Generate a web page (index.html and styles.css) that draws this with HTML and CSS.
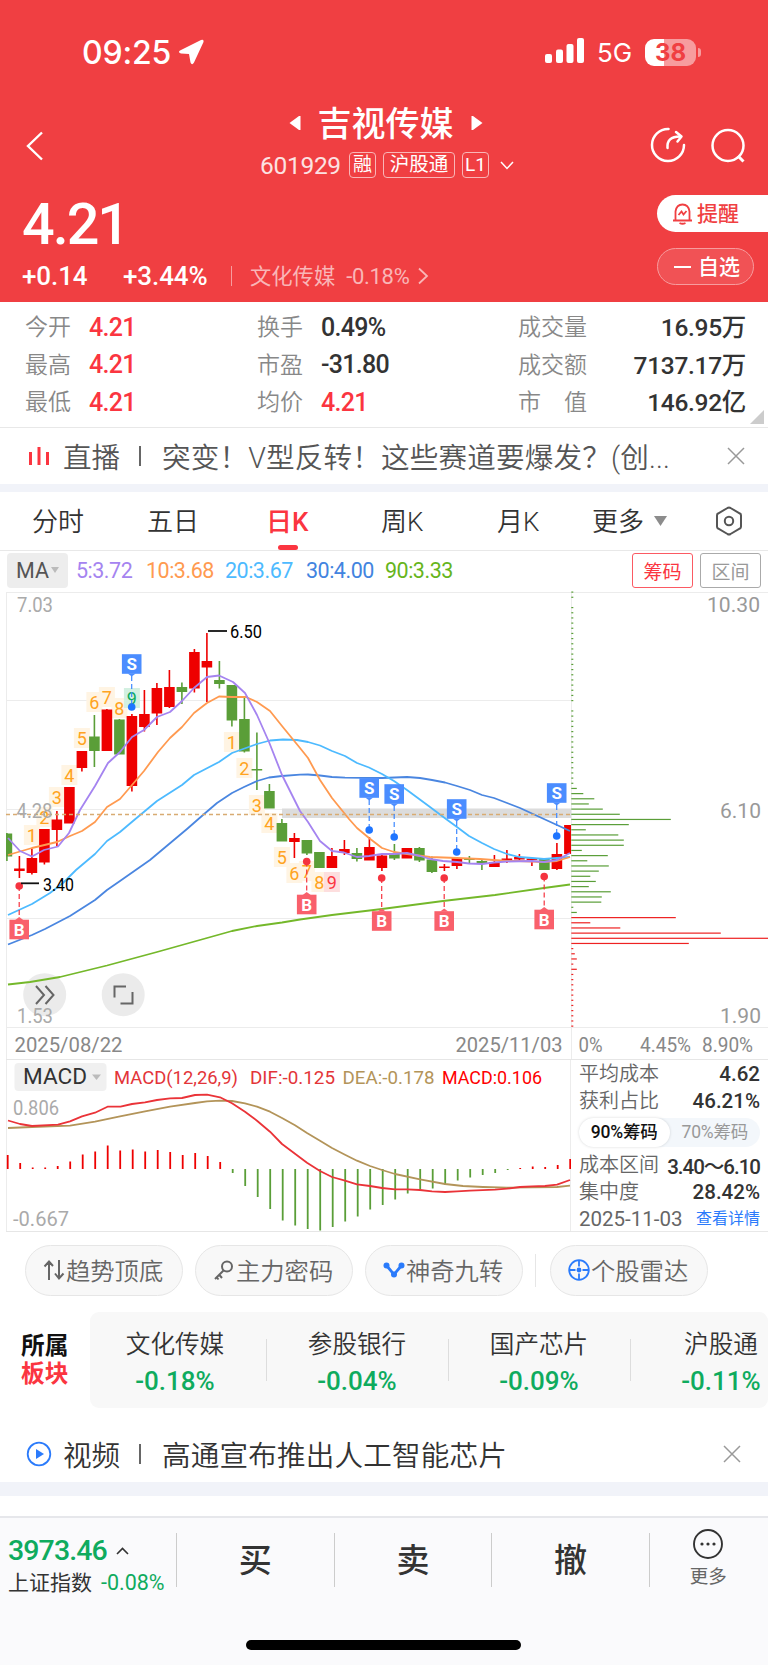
FILE: index.html
```html
<!DOCTYPE html>
<html lang="zh-CN">
<head>
  <meta charset="UTF-8">
  <title>吉视传媒 601929</title>
  <link rel="stylesheet" href="styles.css">
</head>
<body>

<header class="top">
  <div class="status">
    <span class="time">09:25</span>
    <svg width="26" height="26" viewBox="0 0 26 26"><path d="M23 1 L2 11.500 Q-0.500 13.500 3 14.500 L11 15 L12.500 23.500 Q14 27 16 23.500 L25.500 3 Q26 0 23 1Z" fill="#fff"/></svg>
    <svg class="signal" width="40" height="26" viewBox="0 0 40 26" fill="#fff">
      <rect x="0" y="16" width="7" height="9" rx="2"/><rect x="11" y="11.500" width="7" height="13.500" rx="2"/>
      <rect x="21.500" y="6" width="7" height="19" rx="2"/><rect x="32" y="0" width="7" height="25" rx="2"/>
    </svg>
    <span class="net">5G</span>
    <span class="battery">38</span>
    <i class="battery-tip"></i>
  </div>

  <div class="titlebar">
    <svg class="back" width="18" height="30" viewBox="0 0 18 30"><path d="M16 1.500 L2 15 L16 28.500" fill="none" stroke="#fff" stroke-width="2.400"/></svg>
    <div class="title">
      <h1>
        <svg width="12" height="16" viewBox="0 0 12 16"><path d="M11.500 1 V15 L10 15 L0.500 8 L10 1Z" fill="#fff"/></svg>
        <span>吉视传媒</span>
        <svg width="12" height="16" viewBox="0 0 12 16"><path d="M0.500 1 V15 L2 15 L11.500 8 L2 1Z" fill="#fff"/></svg>
      </h1>
      <p>
        <span class="code">601929</span>
        <span class="tag">融</span><span class="tag tag-wide">沪股通</span><span class="tag">L1</span>
        <svg width="14" height="9" viewBox="0 0 14 9"><path d="M1 1 L7 7.500 L13 1" fill="none" stroke="#fff" stroke-width="1.500"/></svg>
      </p>
    </div>
    <svg class="share" width="36" height="36" viewBox="0 0 36 36" fill="none" stroke="#fff" stroke-width="2.500" stroke-linecap="round">
      <path d="M18.500 2 A16 16 0 1 0 34 18"/><path d="M17.500 21 Q16.500 9.500 30 9.500"/><path d="M26 5 L31.500 9.500 L27.500 14.500" stroke-linejoin="round"/>
    </svg>
    <svg class="search" width="36" height="36" viewBox="0 0 36 36" fill="none" stroke="#fff" stroke-width="2.500"><circle cx="18" cy="17.500" r="15.500"/><path d="M28 28 L33.500 33.500" stroke-width="3"/></svg>
  </div>

  <div class="quote">
    <div>
      <div class="price">4.21</div>
      <div class="change">
        <b class="diff">+0.14</b><b class="pct">+3.44%</b><i></i>
        <span class="industry">文化传媒</span><span class="ind-pct">-0.18%</span>
        <svg width="11" height="18" viewBox="0 0 11 18"><path d="M1 1.500 L9 9 L1 16.500" fill="none" stroke="#f9b6b7" stroke-width="1.800"/></svg>
      </div>
    </div>
    <div class="actions">
      <button class="remind">
        <svg width="21" height="22" viewBox="0 0 21 22" fill="none" stroke="#f03f42" stroke-width="1.800"><path d="M1 17.500 H20 M3.500 17 V8.500 Q4.500 1.500 10.500 1.500 Q16.500 1.500 17.500 8.500 V17"/><path d="M6.500 12 L9.500 8.500 L11.500 11.500 L14.500 8"/><path d="M7.500 20 Q10.500 21.500 13.500 20"/></svg><span>提醒</span>
      </button>
      <button class="follow"><i></i><span>自选</span></button>
    </div>
  </div>
</header>

<section class="stats">
  <div><label>今开</label><b class="red">4.21</b></div>
  <div><label>换手</label><b>0.49%</b></div>
  <div><label>成交量</label><b>16.95万</b></div>
  <div><label>最高</label><b class="red">4.21</b></div>
  <div><label>市盈</label><b>-31.80</b></div>
  <div><label>成交额</label><b>7137.17万</b></div>
  <div><label>最低</label><b class="red">4.21</b></div>
  <div><label>均价</label><b class="red">4.21</b></div>
  <div><label class="spread">市值</label><b>146.92亿</b></div>
  <i class="corner"></i>
</section>

<section class="notice">
  <svg width="22" height="20" viewBox="0 0 22 20" stroke="#fb3540" stroke-width="3"><path d="M2.500 6 V19 M11 1 V19 M19.500 6 V19"/></svg>
  <span class="kind">直播</span><i></i><span class="text">突变！V型反转！这些赛道要爆发？(创...</span>
  <svg class="close" width="18" height="18" viewBox="0 0 18 18"><path d="M1 1 L17 17 M17 1 L1 17" stroke="#999" stroke-width="1.500"/></svg>
</section>

<nav class="tabs">
  <a>分时</a><a>五日</a><a class="active">日K</a><a>周K</a><a>月K</a>
  <a class="more">更多<svg width="13" height="10" viewBox="0 0 13 10"><path d="M0 0 H13 L6.500 10Z" fill="#8c8c8c"/></svg></a>
  <svg class="gear" width="28" height="30" viewBox="0 0 28 30" fill="none" stroke="#555" stroke-width="2"><path d="M12.500 2 Q14 1.200 15.500 2 L25 7.500 Q26 8 26 9.500 V20.500 Q26 22 25 22.500 L15.500 28 Q14 28.800 12.500 28 L3 22.500 Q2 22 2 20.500 V9.500 Q2 8 3 7.500Z"/><circle cx="14" cy="15" r="4.200"/></svg>
</nav>

<div class="ma">
  <span class="ma-btn">MA<svg width="8" height="6" viewBox="0 0 8 6"><path d="M0 0 H8 L4 6Z" fill="#bbb"/></svg></span>
  <span class="ma5">5:3.72</span><span class="ma10">10:3.68</span><span class="ma20">20:3.67</span><span class="ma30">30:4.00</span><span class="ma90">90:3.33</span>
  <button class="chip on">筹码</button><button class="chip">区间</button>
</div>

<svg id="kline" class="kline" width="768" height="472" viewBox="0 588 768 472"></svg>

<div class="lower">
  <svg id="macd" width="571" height="174" viewBox="0 1060 571 174"></svg>
  <div class="cost">
    <p><span>平均成本</span><b>4.62</b></p>
    <p><span>获利占比</span><b>46.21%</b></p>
    <div class="switch"><span class="on">90%筹码</span><span>70%筹码</span></div>
    <p><span>成本区间</span><b class="range">3.40～6.10</b></p>
    <p><span>集中度</span><b>28.42%</b></p>
    <p><span class="date">2025-11-03</span><a>查看详情</a></p>
  </div>
</div>

<div class="tools">
  <a><svg width="22" height="22" viewBox="0 0 22 22" fill="none" stroke="#666" stroke-width="2"><path d="M6 21 V3 M1.500 7.500 L6 2.500 L10 7 M16 1 V19 M12 14.500 L16 19.500 L20.500 14.500"/></svg>趋势顶底</a>
  <a><svg width="22" height="22" viewBox="0 0 22 22" fill="none" stroke="#666" stroke-width="2"><circle cx="14" cy="7.500" r="5"/><path d="M10.500 11.500 L2 20 M6 15.500 L9 19 M3.500 18 L5.500 20.500"/></svg>主力密码</a>
  <a><svg width="22" height="22" viewBox="0 0 22 22" fill="none" stroke="#2b7bfb" stroke-width="2.800"><path d="M3.500 6.500 L11 15.500 L18.500 6.500"/><g fill="#2b7bfb" stroke="none"><circle cx="3.500" cy="6.500" r="3"/><circle cx="11" cy="15.500" r="3"/><circle cx="18.500" cy="6.500" r="3"/></g></svg>神奇九转</a>
  <i></i>
  <a><svg width="22" height="22" viewBox="0 0 22 22" fill="none" stroke="#2b7bfb" stroke-width="1.800"><circle cx="11" cy="11" r="9.800"/><path d="M11 1 V7.500 M11 14.500 V21 M1 11 H7.500 M14.500 11 H21"/><circle cx="11" cy="11" r="1.500" fill="#2b7bfb"/></svg>个股雷达</a>
</div>

<section class="sectors">
  <h2>所属<em>板块</em></h2>
  <div class="sector-list">
    <div><span>文化传媒</span><b>-0.18%</b></div>
    <div><span>参股银行</span><b>-0.04%</b></div>
    <div><span>国产芯片</span><b>-0.09%</b></div>
    <div><span>沪股通</span><b>-0.11%</b></div>
  </div>
</section>

<section class="notice video">
  <svg width="26" height="26" viewBox="0 0 26 26"><circle cx="13" cy="13" r="11.300" fill="none" stroke="#2b7bfb" stroke-width="1.800"/><path d="M10 8 L18 13 L10 18Z" fill="#2b7bfb"/></svg>
  <span class="kind">视频</span><i></i><span class="text">高通宣布推出人工智能芯片</span>
  <svg class="close" width="18" height="18" viewBox="0 0 18 18"><path d="M1 1 L17 17 M17 1 L1 17" stroke="#999" stroke-width="1.500"/></svg>
</section>

<footer class="bottom">
  <div class="bar">
    <div class="index">
      <div class="idx-val">3973.46<svg width="13" height="8" viewBox="0 0 13 8"><path d="M1 7 L6.500 1.500 L12 7" fill="none" stroke="#333" stroke-width="1.600"/></svg></div>
      <div class="idx-name">上证指数<span>-0.08%</span></div>
    </div>
    <a>买</a><a>卖</a><a>撤</a>
    <div class="more-btn">
      <svg width="32" height="32" viewBox="0 0 32 32"><circle cx="16" cy="16" r="14" fill="none" stroke="#333" stroke-width="1.900"/><g fill="#333"><circle cx="10" cy="16" r="1.600"/><circle cx="16" cy="16" r="1.600"/><circle cx="22" cy="16" r="1.600"/></g></svg>
      <span>更多</span>
    </div>
  </div>
  <div class="home"></div>
</footer>

<script src="chart.js"></script>
</body>
</html>
```

FILE: styles.css
```css
* {
  box-sizing: border-box;
}
body {
  margin: 0;
  width: 768px;
  background: #fff;
  color: #333;
  font-family: Roboto, "Noto Sans CJK SC", sans-serif;
  overflow-x: hidden;
}
h1, h2, p {
  margin: 0;
}
button {
  border: none;
  font-family: inherit;
  padding: 0;
}
svg {
  flex: none;
  display: block;
}
span, label, b, a {
  white-space: nowrap;
}
.red {
  color: #fb3540;
}

/* header */
.top {
  height: 302px;
  background: #f03f42;
  color: #fff;
}
.status {
  display: flex;
  align-items: center;
  height: 104px;
  padding-left: 82px;
}
.time {
  width: 96px;
  font: 500 32px Inter, sans-serif;
  letter-spacing: -0.2px;
}
.signal {
  margin: -2px 0 0 341px;
}
.net {
  width: 48px;
  margin-left: 12px;
  font: 26px Inter, sans-serif;
}
.battery {
  width: 51px;
  height: 27px;
  border-radius: 9px;
  background: linear-gradient(90deg, #fff 19px, #f79c9e 19px);
  color: #f03f42;
  font: 700 24px/27px Inter, sans-serif;
  text-align: center;
}
.battery-tip {
  width: 3px;
  height: 9px;
  margin-left: 2px;
  border-radius: 0 3px 3px 0;
  background: #f79c9e;
}
.titlebar {
  display: flex;
  height: 84px;
  padding: 0 22px 0 26px;
}
.back {
  margin-top: 27px;
}
.title {
  flex: 1;
  padding-left: 16px;
}
.title h1 {
  display: flex;
  align-items: center;
  justify-content: center;
  gap: 17px;
  height: 38px;
  padding-left: 62px;
  font-size: 34px;
  font-weight: 500;
}
.title h1 span {
  margin-top: -3px;
}
.title p {
  display: flex;
  align-items: center;
  height: 40px;
  padding-left: 200px;
  margin-top: 3px;
}
.code {
  width: 89px;
  font-size: 24.5px;
  opacity: 0.85;
  letter-spacing: -0.3px;
}
.tag {
  width: 27px;
  height: 26px;
  margin-right: 7px;
  border: 1px solid #f9b6b7;
  border-radius: 4px;
  font-size: 19px;
  line-height: 23px;
  text-align: center;
}
.tag-wide {
  width: 72px;
  font-size: 19.5px;
}
.title p svg {
  margin-left: 4px;
}
.share {
  margin: 23px 25px 0 0;
  position: relative;
  left: 1px;
}
.search {
  margin-top: 24px;
}
.quote {
  display: flex;
  justify-content: space-between;
  padding-left: 22px;
}
.price {
  height: 71px;
  font-size: 57.5px;
  line-height: 73px;
  font-weight: 500;
  letter-spacing: -2px;
}
.change {
  display: flex;
  align-items: center;
  height: 34px;
  font-size: 26px;
}
.change b {
  font-weight: 500;
  letter-spacing: -0.1px;
}
.diff {
  width: 101px;
}
.pct {
  width: 108px;
}
.change i {
  width: 1px;
  height: 20px;
  margin-right: 18px;
  background: #f79c9e;
}
.industry, .ind-pct {
  color: #f9b6b7;
  font-size: 21.3px;
}
.industry {
  margin-top: -3px;
}
.ind-pct {
  width: 72px;
  margin-left: 11px;
  font-size: 22px;
  letter-spacing: -0.3px;
}
.actions {
  width: 111px;
  padding-top: 7px;
}
.actions button {
  display: flex;
  align-items: center;
  height: 37px;
  font-size: 21px;
  font-weight: 500;
}
.actions button span {
  margin-top: -3px;
}
.remind {
  width: 111px;
  padding-left: 15px;
  border-radius: 19px 0 0 19px;
  background: #fff;
  color: #f03f42;
}
.remind svg {
  margin-right: 4px;
}
.actions .follow {
  width: 97px;
  margin-top: 16px;
  padding-left: 16px;
  border: 1px solid #f79c9e;
  border-radius: 19px;
  background: #f15255;
  color: #fff;
}
.follow i {
  width: 17px;
  height: 2px;
  margin-right: 7px;
  background: #fff;
}

/* quote numbers */
.stats {
  position: relative;
  display: grid;
  grid-template-columns: 232px 261px 228px;
  grid-auto-rows: 37.5px;
  height: 126px;
  padding: 5px 0 0 25px;
  border-bottom: 1px solid #e8e8e8;
}
.stats div {
  display: flex;
  align-items: center;
}
.stats label {
  width: 64px;
  margin-top: -1px;
  color: #888;
  font-size: 23px;
  font-weight: 350;
}
.stats b {
  font-size: 25px;
  font-weight: 500;
  letter-spacing: -0.7px;
  padding-top: 3px;
}
.stats div:nth-child(3n) {
  justify-content: space-between;
}
.stats div:nth-child(3n) b {
  padding-top: 0;
  font-size: 24.5px;
  letter-spacing: -0.3px;
}
.stats .spread {
  width: 92px;
  letter-spacing: 23px;
}
.corner {
  position: absolute;
  right: 4px;
  bottom: 3px;
  border: 7px solid transparent;
  border-right-color: #ccc;
  border-bottom-color: #ccc;
}

.notice {
  display: flex;
  align-items: center;
  height: 64px;
  padding: 0 23px 0 28px;
  border-bottom: 8px solid #f1f3f9;
  color: #555;
  font-size: 28.6px;
  font-weight: 350;
}
.notice span {
  margin-top: -1px;
}
.notice .kind {
  width: 76px;
  margin-left: 13px;
}
.notice .text {
  letter-spacing: 0.15px;
}
.notice i {
  width: 2px;
  height: 20px;
  margin-right: 21px;
  background: #666;
}
.notice .close {
  margin-left: auto;
}

/* period tabs */
.tabs {
  display: flex;
  align-items: center;
  height: 59px;
  padding-left: 32px;
  border-bottom: 1px solid #e8e8e8;
  font-size: 26px;
  font-weight: 350;
}
.tabs a {
  position: relative;
  width: 115px;
  margin-top: -4px;
}
.tabs a:nth-child(2) {
  width: 119px;
}
.tabs a:nth-child(4) {
  width: 116px;
}
.tabs a:nth-child(5) {
  width: 95px;
}
.tabs .active {
  color: #fb3540;
  font-weight: 500;
}
.tabs .active::after {
  content: "";
  position: absolute;
  left: 12px;
  bottom: -12px;
  width: 20px;
  height: 5px;
  border-radius: 3px;
  background: #fb3540;
}
.tabs .more {
  display: flex;
  align-items: center;
  gap: 10px;
  width: 123px;
}
.tabs .more svg {
  margin-top: 3px;
}

.ma {
  display: flex;
  align-items: center;
  height: 37px;
  padding: 1px 0 0 7px;
  font-size: 21.5px;
}
.ma-btn {
  display: flex;
  align-items: center;
  justify-content: center;
  gap: 2px;
  width: 61px;
  height: 35px;
  margin-right: 8px;
  border-radius: 4px;
  background: #ededed;
  color: #555;
}
.ma5 { width: 70px; color: #a584f0; }
.ma10 { width: 79px; color: #ff9a50; }
.ma20 { width: 81px; color: #4dbaff; }
.ma30 { width: 79px; color: #4284e0; }
.ma90 { width: 247px; color: #66b51c; }
.ma > span:not(.ma-btn) {
  letter-spacing: -0.5px;
}
.chip {
  width: 61px;
  height: 35px;
  margin-right: 7px;
  border: 1px solid #aaa;
  border-radius: 3px;
  background: #fff;
  color: #999;
  font-size: 19px;
}
.chip.on {
  border-color: #fb5a63;
  color: #fb3540;
}

/* chart texts, drawn by chart.js */
svg text {
  font-family: Roboto, "Noto Sans CJK SC", sans-serif;
}
.axis { fill: #aaa; font-size: 20px; }
.axis2 { fill: #999; font-size: 21px; }
.dates { fill: #888; font-size: 20px; }
.td { font-size: 18px; text-anchor: middle; }
.mark { fill: #fff; font-size: 17px; font-weight: 700; text-anchor: middle; }

.lower {
  display: flex;
  height: 174px;
}
.cost {
  width: 197px;
  height: 172px;
  padding: 0 8px;
  border-bottom: 1px solid #e8e8e8;
}
.cost p {
  display: flex;
  align-items: center;
  justify-content: space-between;
  height: 27px;
  color: #666;
  font-size: 20px;
}
.cost p span:not(.date) {
  margin-top: -2px;
  font-weight: 350;
}
.cost p b {
  color: #333;
  font-size: 20.5px;
  font-weight: 500;
}
.cost p .range {
  letter-spacing: -1px;
}
.cost .date {
  font-size: 20.5px;
}
.cost p a {
  margin-top: -3px;
  color: #2b7bfb;
  font-size: 16px;
}
.switch {
  display: flex;
  height: 29px;
  margin: 4px 0 4px;
  border-radius: 15px;
  background: #f3f7fb;
  font-size: 17.5px;
  line-height: 28px;
  text-align: center;
  color: #999;
  letter-spacing: -0.2px;
}
.switch span {
  flex: 1;
}
.switch .on {
  border-radius: 15px;
  background: #fff;
  box-shadow: 0 0 3px rgba(0,0,0,0.15);
  color: #111;
  font-weight: 500;
}

.tools {
  display: flex;
  align-items: center;
  height: 78px;
  padding: 0 0 5px 25px;
}
.tools a {
  display: flex;
  align-items: center;
  gap: 1px;
  width: 158px;
  height: 51px;
  margin-right: 12px;
  padding: 0 0 2px 17px;
  border: 1px solid #e6e6e6;
  border-radius: 26px;
  background: #f8f8f8;
  color: #666;
  font-size: 24.3px;
  font-weight: 350;
}
.tools i {
  width: 1px;
  height: 33px;
  margin-right: 14px;
  background: #e6e6e6;
}

.sectors {
  display: flex;
  height: 96px;
}
.sectors h2 {
  width: 90px;
  padding: 20px 0 0 21px;
  color: #111;
  font-size: 23.7px;
  line-height: 28px;
}
.sectors em {
  display: block;
  color: #fb3540;
  font-style: normal;
}
.sector-list {
  display: flex;
  width: 678px;
  overflow: hidden;
  border-radius: 9px;
  background: #f8f8f8;
}
.sector-list div {
  position: relative;
  flex: none;
  display: flex;
  flex-direction: column;
  align-items: center;
  width: 182px;
  left: -6px;
  padding-top: 14px;
  font-size: 24.6px;
  line-height: 37px;
  font-weight: 350;
}
.sector-list div + div::before {
  content: "";
  position: absolute;
  left: 0;
  top: 27px;
  width: 1px;
  height: 42px;
  background: #ddd;
}
.sector-list b {
  color: #0fab5e;
  font-size: 26px;
  font-weight: 500;
  letter-spacing: 0;
}
.video {
  height: 88px;
  padding: 17px 27px 0 26px;
  border-bottom-width: 14px;
  color: #333;
}
.video .kind {
  margin-left: 11px;
}

/* trade bar */
.bottom {
  height: 149px;
  margin-top: 20px;
  border-top: 2px solid #e6e7eb;
  background: #fafafc;
}
.bar {
  display: flex;
  padding-top: 15px;
}
.index {
  width: 176px;
  padding-left: 8px;
}
.idx-val {
  display: flex;
  align-items: center;
  gap: 9px;
  height: 35px;
  color: #0fab5e;
  font-size: 28.5px;
  font-weight: 500;
  letter-spacing: -0.9px;
}
.idx-name {
  font-size: 21px;
  line-height: 30px;
}
.idx-name span {
  margin-left: 9px;
  color: #0fab5e;
  font-size: 21.5px;
}
.bar > a {
  width: 157.6px;
  height: 54px;
  border-left: 1px solid #ccc;
  font-size: 33px;
  line-height: 56px;
  font-weight: 500;
  text-align: center;
}
.more-btn {
  display: flex;
  flex-direction: column;
  align-items: center;
  width: 118px;
  height: 54px;
  border-left: 1px solid #ccc;
  color: #666;
  font-size: 18.5px;
}
.more-btn svg {
  margin-top: -5px;
}
.more-btn span {
  line-height: 35px;
}
.home {
  width: 275px;
  height: 10px;
  margin: 42px 0 0 246px;
  border-radius: 5px;
  background: #000;
}
```

FILE: chart.js
```js
const RED = "#ee0000", GREEN = "#5a9e38";
const step = 12.5;
const cx = i => 6.9 + i * step;

function line(x1, y1, x2, y2, color, w = 1, extra = "") {
  return `<line x1="${x1}" y1="${y1}" x2="${x2}" y2="${y2}" stroke="${color}" stroke-width="${w}" ${extra}/>`;
}
function rect(x, y, w, h, color, extra = "") {
  return `<rect x="${x}" y="${y}" width="${w}" height="${h}" fill="${color}" ${extra}/>`;
}
function text(x, y, str, cls, len, extra = "") {
  const fit = len ? `textLength="${len}" lengthAdjust="spacingAndGlyphs"` : "";
  return `<text x="${x}" y="${y}" class="${cls}" ${fit} ${extra}>${str}</text>`;
}
function poly(points, color) {
  return `<polyline points="${points}" fill="none" stroke="${color}" stroke-width="1.800" stroke-linejoin="round"/>`;
}

// [up, top, bottom, high, low]
const candles = [
  [0,833.5,856.5,833,861],[1,868.5,871,856,878],[1,858,873,849,874.5],[1,829,862.5,829,864.5],[1,819.5,830,811,846],
  [1,787,823.5,787,823],[1,751,768,751,771.5],[0,736.5,751,715,767],[1,709.5,751,709,751],[0,719.5,754.5,719,754],
  [1,716,786,714,791.5],[1,714,727,690,731.5],[1,688,713.5,683,725],[1,687,707,670,708],[0,687,692,682.5,704],
  [1,652,688.5,649,692.5],[1,661,667.5,633,702],[0,680,684,661,688.5],[0,685,720.5,685,726.5],[0,719,751.5,697,752.5],
  [0,769,770.5,732.5,790],[0,791,808.5,784,808],[0,823,841.5,819,841],[1,838,842,833,858],[0,840,853.5,840,855],
  [0,852,868,852,868],[1,856,868,848,868],[1,849,853,840,855],[0,853,859,848,861.5],[1,847,860.5,837,860],
  [1,855.5,868,854,871],[0,854,858.5,844,860],[1,848,858.5,848,858],[0,848,860.5,847,862],[0,859.5,872,856.5,873],
  [1,866.5,868,864,871],[1,858,866,857,869],[0,858.5,860,856,863],[0,861,864,859,870],[1,862,867,855,867],
  [1,858.5,861,850,863],[1,857,859.5,854,862],[1,858.5,860,858,866],[0,858.5,870,858,870],[1,854,869,843,870],
  [1,825,854,825,854]
];

const ma = {
  "#74b82a": "8,984.5 30,982 60,977 107,965.5 157,952 207,938 232,931 257,926 282,922.5 300,919.5 332,915 382,909 443,901 495,895 544,888 570,884.5",
  "#4a86e0": "8,944.5 32,935 45,929 70,916 95,900 107,890 120,881 150,860 187,829 203,815 217,803 232,793 244,787 257,781 269,777.5 282,776 300,774.7 308,774.5 320,775.5 332,777 345,777.7 382,778 407,777 420,778 432,780 445,782.5 457,786 470,790 482,795 494,798 520,808 545,819.5 557,825 570,831",
  "#4dbaff": "8,915 32,904 50,893 63,883 76,870 95,854 107,841 120,832 133,821 157,801 182,785 194,775 219,762 232,753 257,744 270,740.5 283,739.5 297,740 308,742 320,745.5 332,751 345,756 357,763 369,767.5 382,774 394,781 407,790 430,807 446,819 457,827 469,836 482,843 494,849 507,854 519,857 532,858 544,859 570,857",
  "#ff9a50": "8,855 32,848 57,842 70,836 82,831 95,822 107,807 120,799 132,785 144,771 158,752 170,738 182,727 194,713 207,703 219,696.5 232,697 246,697 257,702 270,711 282,726 300,748 308,758 320,780 332,798 349,819 357,828 369,838 382,848 394,852 407,854 430,857 457,858 480,859 507,861 519,861 544,862 557,861 570,857",
  "#a584f0": "8,838 20,851 32,856.5 44,850 58,846.5 69,833 80,810 95,786 108,763 120,752 132,737 144,730 157,717 170,712 182,701 194,688 207,677 219,675.5 233,682 245,693 257,715 269,742 282,775 300,811 308,822 320,841 332,851 344,852.5 357,857 369,856 382,854 394,854 407,853 420,856 430,859 443,861 457,862 469,863.5 482,864 494,862.5 507,861.5 532,861 544,862 557,860 570,853"
};

// nine-turn counts: [index, center y, number]
const turns = [
  [2,835,1],[3,817,2],[4,797,3],[5,775,4],[6,738,5],[7,702,6],[8,697,7],[9,708,8],[10,698,9,"#0fab5e","#d3f0e1"],
  [18,742,1],[19,768,2],[20,805,3],[21,823,4],[22,857,5],[23,873,6],[24,871,7],[25,882,8],[26,882,9,"#fb3540","#fddede"]
];
const sells = [[10,664,707],[29,788,830],[31,794,837],[36,809,852],[44,793,836]];
const buys = [[1,929.5,886],[24,904.5,861.5],[30,921,878],[35,921,878],[43,919.5,876.5]];

let s = "";
for (const y of [592.5, 700.5, 809.5, 918.5, 1027.5]) s += line(6, y, y === 592.5 || y === 1027.5 ? 768 : 571, y, "#ececec");
s += line(6.5, 592, 6.5, 1060, "#ececec") + line(571.5, 592, 571.5, 1060, "#ececec") + line(6, 1059.5, 768, 1059.5, "#e6e6e6");
s += `<circle cx="44.700" cy="994.700" r="21.500" fill="#ebebeb"/><circle cx="123.200" cy="994.700" r="21.500" fill="#ebebeb"/>`;
s += rect(282, 808.5, 289, 9.5, "#dcdcdc");

for (const [i, y, n, color = "#ffa320", bg = "#fff4e3"] of turns) {
  s += rect(cx(i) - 8, y - 10, 16, 20, bg) + text(cx(i), y + 6.7, n, "td", 0, `fill="${color}"`);
}

s += `<clipPath id="plot"><rect x="6" y="592" width="565" height="436"/></clipPath><g clip-path="url(#plot)">`;
candles.forEach(([up, top, bot, hi, lo], i) => {
  const c = up ? RED : GREEN;
  s += line(cx(i), hi, cx(i), lo, c, 1.6) + rect(cx(i) - 5.3, top, 10.6, bot - top, c);
});
s += "</g>";
for (const color in ma) s += poly(ma[color], color);
s += line(6, 814.5, 571, 814.5, "#d8ab72", 1.5, 'stroke-dasharray="4 3"');

for (const [i, y, dot] of sells) {
  const x = cx(i) - 0.2;
  s += line(x, y + 12, x, dot, "#3d88ff", 1.2, 'stroke-dasharray="5 3"');
  s += `<circle cx="${x}" cy="${dot}" r="3.800" fill="#1f75ff"/>`;
  s += rect(x - 9.8, y - 9.8, 19.6, 19.6, "#4b8dff") + `<path d="M${x - 4} ${y + 9.5} h8 l-4 3Z" fill="#4b8dff"/>`;
  s += text(x, y + 6, "S", "mark");
}
for (const [i, y, dot] of buys) {
  const x = cx(i) - 0.2;
  s += line(x, dot, x, y - 12, "#f5333f", 1.2, 'stroke-dasharray="5 3"');
  s += `<circle cx="${x}" cy="${dot}" r="3.800" fill="#f5333f"/>`;
  s += rect(x - 9.8, y - 9.8, 19.6, 19.6, "#f9606b") + `<path d="M${x - 4} ${y - 9.5} h8 l-4 -3Z" fill="#f9606b"/>`;
  s += text(x, y + 6, "B", "mark");
}

s += line(208, 631, 227, 631, "#111", 1.8) + text(230, 638, "6.50", "td", 32, 'style="text-anchor:start"');
s += line(21, 883.3, 39, 883.3, "#111", 1.8) + text(43, 890.5, "3.40", "td", 31, 'style="text-anchor:start"');
s += text(17, 612, "7.03", "axis", 36) + text(16.5, 817.5, "4.28", "axis", 36) + text(17, 1022.5, "1.53", "axis", 36);
s += `<path d="M36 986 l8 9 -8 9 M45.500 986 l8 9 -8 9 M126 986.500 h-11.500 v11 M132.500 992 v11.500 h-12" fill="none" stroke="#666" stroke-width="2"/>`;

// chip distribution, one bar every 5.167px
const long = [5.5,12,23,17.5,31.5,48.5,99.5,57.5,14.5,47,52.5,52.5,10.5,36.5,16,37.5,27.5,19,24.5,17.5,39.5,30.5,30,2,5.5,
  104.5,19,49,149.5,197,117.5,2,3.5,5.5,2,5.5];
for (let k = 0; k <= 84; k++) {
  if (k === 2 || k === 22) continue;
  const w = k >= 38 && k < 38 + long.length ? long[k - 38] : 2;
  s += rect(571.3, 591.5 + k * 5.167, w, 1.2, k < 63 ? GREEN : "#ee2222");
}
s += text(707, 612, "10.30", "axis2", 53) + text(720, 818, "6.10", "axis2", 41) + text(720, 1023, "1.90", "axis2", 41);
s += text(14.5, 1051.5, "2025/08/22", "dates", 108) + text(455.5, 1051.5, "2025/11/03", "dates", 107);
s += text(578.5, 1051.5, "0%", "dates", 24) + text(640, 1051.5, "4.45%", "dates", 51) + text(702, 1051.5, "8.90%", "dates", 51);
document.getElementById("kline").innerHTML = s;

// MACD
const hist = [14,6,1.5,1.5,3,7.5,14.5,17.5,23.5,18.5,19.5,17.5,19,17,14,16,13,7,-4,-17,-28,-40,-51.5,-56.5,-60,-61.5,-58,-52.5,
  -47.5,-40.5,-36,-30.5,-24.5,-20.5,-19.5,-16,-11.5,-8.5,-6,-4,-1,1,2.5,2,4,10];
const dif = "8,1120.5 20,1124 32,1126 58,1124.7 70,1121.3 82,1116.3 95,1112.7 107.5,1106.7 120.5,1106.7 132,1104 145,1102.3 157,1100 170,1098.3 182,1098 195,1095 207,1094.7 220,1097.3 232,1103.3 245,1111.7 257,1120.7 270,1131.7 282,1144 295,1153.7 307,1162.7 320,1171 332,1177 345,1180.7 357,1184.3 370,1186 382,1188 395,1189.3 407,1189.3 420,1190 432,1191.3 445,1192 457,1191.3 470,1190.7 495,1189.7 507,1188.7 520,1187 532,1186.3 545,1186 557,1184.7 570,1180";
const dea = "8,1128 32,1127 70,1125.7 95,1121.7 120,1116.3 145,1111.3 170,1106.7 195,1103 207,1101.3 220,1100.7 232,1101 245,1103.3 257,1106.7 270,1111.7 282,1118 295,1125.3 307,1133 320,1140.7 332,1148 345,1154.7 357,1160.7 370,1166 382,1170 395,1174 420,1179.3 445,1184 463,1186 483,1187 507,1187.7 532,1187.3 557,1187 570,1185.7";

let m = line(6.5, 1060, 6.5, 1232, "#ececec") + line(570.5, 1060, 570.5, 1232, "#ececec") + line(6, 1231.5, 571, 1231.5, "#e6e6e6");
hist.forEach((h, i) => {
  const x = 6.8 + i * step;
  m += h > 0 ? rect(x, 1169 - h, 1.8, h, RED) : rect(x, 1169, 1.8, -h, GREEN);
});
m += poly(dea, "#b39459") + poly(dif, "#ea3338");
m += rect(14.5, 1063, 92, 28, "#f0f0f0", 'rx="4"') + `<path d="M92 1074.500 h9 l-4.500 5.500Z" fill="#bbb"/>`;
m += text(23, 1084, "MACD", "dates", 64, 'style="fill:#333;font-size:21.500px"');
const head = (x, str, len, color) => text(x, 1084, str, "td", len, `style="text-anchor:start;fill:${color}"`);
m += head(114, "MACD(12,26,9)", 124, "#e33539") + head(250, "DIF:-0.125", 85, "#e33539") + head(342.5, "DEA:-0.178", 92, "#b39459") + head(442, "MACD:0.106", 100, "#ff0000");
m += text(13, 1115, "0.806", "axis", 46) + text(13, 1225.5, "-0.667", "axis", 56);
document.getElementById("macd").innerHTML = m;
```
